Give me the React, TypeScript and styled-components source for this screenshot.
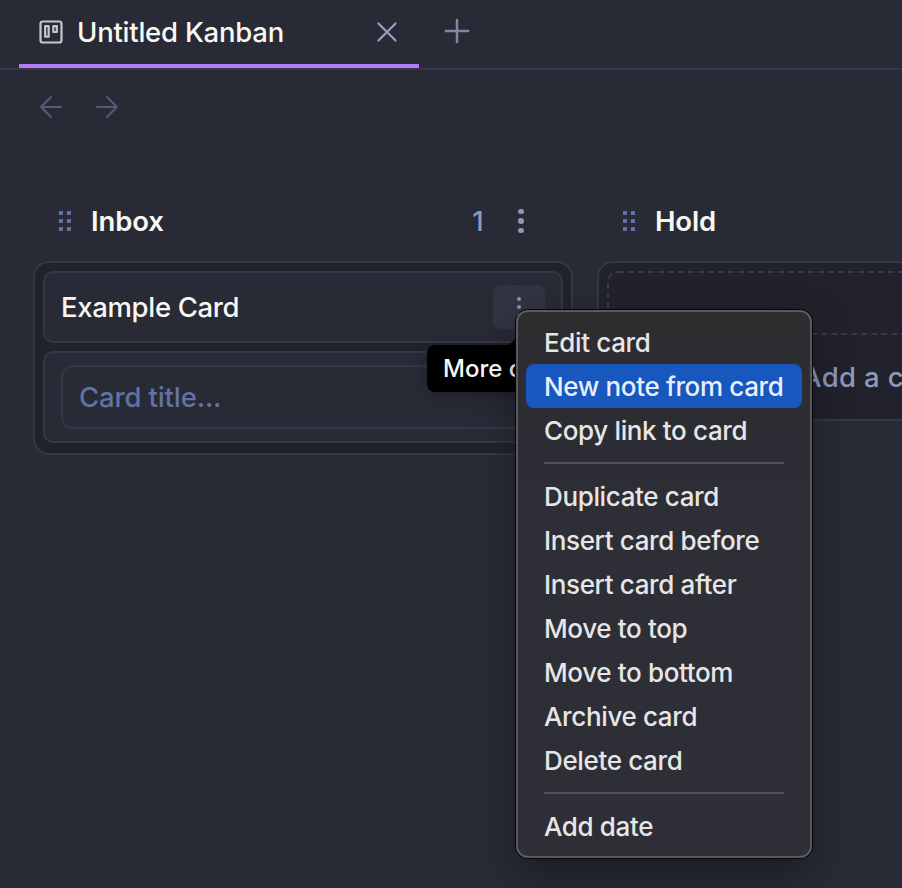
import React from "react";
import styled, { createGlobalStyle } from "styled-components";

const GlobalStyle = createGlobalStyle`
  * { box-sizing: border-box; }
  html, body { margin: 0; background: #282a36; overflow: hidden; }
  body { font-family: Inter, "Liberation Sans", sans-serif; font-weight: 450; color: #f8f8f2; }
`;

const Window = styled.main`
  position: relative;
  display: flex;
  flex-direction: column;
  width: 902px;
  height: 888px;
  overflow: hidden;
  background: #282a36;
`;

const TabBar = styled.header`
  display: flex;
  height: 70px;
  padding-left: 19px;
  border-bottom: 2px solid #343746;
`;

const Tab = styled.div`
  display: flex;
  align-items: center;
  width: 400px;
  height: 68px;
  padding: 0 15px 0 18px;
  border-bottom: 4px solid #b07cf9;
`;

const TabTitle = styled.span`
  flex: 1;
  margin-left: 12px;
  font-size: 27.5px;
  letter-spacing: -0.23px;
  line-height: 36px;
  white-space: nowrap;
`;

const Icon = styled.svg<{ $size: number; $color: string; $stroke: number }>`
  display: block;
  flex: none;
  width: ${(p) => p.$size}px;
  height: ${(p) => p.$size}px;
  fill: none;
  stroke: ${(p) => p.$color};
  stroke-width: ${(p) => p.$stroke};
  stroke-linecap: round;
  stroke-linejoin: round;
`;

const NewTab = styled.button`
  display: flex;
  margin: 12px 0 0 19px;
  padding: 0;
  border: 0;
  background: none;
`;

const NavBar = styled.nav`
  display: flex;
  align-items: center;
  gap: 22px;
  height: 74px;
  padding-left: 34px;
`;

const Board = styled.section`
  display: flex;
  align-items: flex-start;
  gap: 24px;
  padding: 37px 0 0 33px;
`;

const Column = styled.section`
  flex: none;
  width: 540px;
`;

const ColumnHeader = styled.div`
  display: flex;
  align-items: center;
  height: 80px;
  padding: 0 49.5px 0 26px;
`;

const Grip = styled.div`
  display: grid;
  grid-template-columns: 4px 4px;
  grid-auto-rows: 4px;
  gap: 4px;
`;

const GripDot = styled.i`
  background: #6272a4;
`;

const ColumnTitle = styled.h2`
  flex: 1;
  margin: 0 0 0 20px;
  font-size: 27.5px;
  font-weight: 600;
  letter-spacing: -0.15px;
  line-height: 36px;
`;

const Count = styled.span`
  margin-right: 34.5px;
  font-size: 27.5px;
  line-height: 36px;
  color: #8e99bd;
`;

const Dots = styled.div<{ $size: number; $gap: number }>`
  display: flex;
  flex-direction: column;
  gap: ${(p) => p.$gap}px;
  i {
    width: ${(p) => p.$size}px;
    height: ${(p) => p.$size}px;
    border-radius: 50%;
    background: #8e97b8;
  }
`;

const Lane = styled.div`
  display: flex;
  flex-direction: column;
  gap: 8px;
  padding: 8px 8px 10px;
  border: 2px solid #343746;
  border-radius: 16px;
  background: #21222c;
`;

const Card = styled.article`
  display: flex;
  align-items: center;
  justify-content: space-between;
  height: 72px;
  padding: 0 16px;
  border: 2px solid #343746;
  border-radius: 10px;
  background: #282a36;
`;

const CardTitle = styled.span`
  font-size: 27.5px;
  letter-spacing: -0.33px;
  line-height: 36px;
`;

const CardMenuButton = styled.button`
  display: flex;
  align-items: center;
  justify-content: center;
  width: 52px;
  height: 44px;
  padding: 0;
  border: 0;
  border-radius: 8px;
  background: #313442;
`;

const CardForm = styled(Card)`
  height: 92px;
  padding: 0 16px;
`;

const TitleInput = styled.div`
  flex: 1;
  height: 64px;
  padding-left: 16px;
  border: 2px solid #343746;
  border-radius: 12px;
  font-size: 27.5px;
  letter-spacing: -0.13px;
  line-height: 60px;
  color: #6272a4;
`;

const EmptyCards = styled.svg`
  display: block;
  width: 520px;
  height: 64px;
  fill: none;
  stroke: #383a49;
  stroke-width: 2;
  stroke-dasharray: 6 4;
`;

const AddCard = styled.div`
  height: 66px;
  padding: 0 0 0 195px;
  font-size: 27.5px;
  letter-spacing: 0.35px;
  line-height: 68px;
  color: #8e99bd;
`;

const Tooltip = styled.div`
  position: absolute;
  left: 427px;
  top: 345px;
  width: 184px;
  height: 47px;
  padding-left: 16px;
  border-radius: 8px;
  background: #000;
  box-shadow: 0 4px 16px rgba(0, 0, 0, 0.25);
  color: #fafafa;
  font-size: 24px;
  font-weight: 550;
  line-height: 47px;
  &::before {
    content: "";
    position: absolute;
    left: 82px;
    top: -10px;
    border: solid transparent;
    border-width: 0 10px 10px;
    border-bottom-color: #000;
  }
`;

const Menu = styled.div`
  position: absolute;
  left: 516px;
  top: 310px;
  width: 296px;
  height: 548px;
  padding: 8px;
  border: 2px solid #58595d;
  border-radius: 12px;
  background: linear-gradient(#2d2c2f, #2c2d34 120px, #2e2e36 200px);
  box-shadow: 0 0 0 1px #060608, 0 14px 40px rgba(0, 0, 0, 0.36);
`;

const MenuItem = styled.div<{ $active?: boolean }>`
  height: 44px;
  padding-left: 18px;
  border-radius: 8px;
  background: ${(p) => (p.$active ? "#1857bd" : "transparent")};
  color: ${(p) => (p.$active ? "#e8eefb" : "#e6e6e6")};
  font-size: 26px;
  letter-spacing: -0.36px;
  line-height: 46px;
  white-space: nowrap;
`;

const Divider = styled.div`
  height: 2px;
  margin: 10px 18px;
  background: #515259;
`;

const groups = [
  ["Edit card", "New note from card", "Copy link to card"],
  ["Duplicate card", "Insert card before", "Insert card after", "Move to top", "Move to bottom", "Archive card", "Delete card"],
  ["Add date"],
];

const GripHandle = () => (
  <Grip>{[0, 1, 2, 3, 4, 5].map((n) => <GripDot key={n} />)}</Grip>
);

export default function App() {
  return (
    <Window>
      <GlobalStyle />
      <TabBar>
        <Tab>
          <Icon viewBox="0 0 24 24" $size={28} $color="#c6c7c6" $stroke={1.9}>
            <rect x="3" y="3" width="18" height="18" rx="2" />
            <rect x="7" y="7" width="3" height="9" />
            <rect x="14" y="7" width="3" height="5" />
          </Icon>
          <TabTitle>Untitled Kanban</TabTitle>
          <Icon viewBox="0 0 24 24" $size={34} $color="#949fc0" $stroke={1.6}>
            <path d="M18 6 6 18M6 6l12 12" />
          </Icon>
        </Tab>
        <NewTab>
          <Icon viewBox="0 0 24 24" $size={38} $color="#7f87a6" $stroke={1.6}>
            <path d="M5 12h14M12 5v14" />
          </Icon>
        </NewTab>
      </TabBar>
      <NavBar>
        <Icon viewBox="0 0 24 24" $size={34} $color="#535b74" $stroke={1.5}>
          <path d="M19 12H5M12 19l-7-7 7-7" />
        </Icon>
        <Icon viewBox="0 0 24 24" $size={34} $color="#535b74" $stroke={1.5}>
          <path d="M5 12h14M12 5l7 7-7 7" />
        </Icon>
      </NavBar>
      <Board>
        <Column>
          <ColumnHeader>
            <GripHandle />
            <ColumnTitle>Inbox</ColumnTitle>
            <Count>1</Count>
            <Dots $size={5.4} $gap={4}><i /><i /><i /></Dots>
          </ColumnHeader>
          <Lane>
            <Card>
              <CardTitle>Example Card</CardTitle>
              <CardMenuButton>
                <Dots $size={4.6} $gap={3.6}><i /><i /><i /></Dots>
              </CardMenuButton>
            </Card>
            <CardForm>
              <TitleInput>Card title...</TitleInput>
            </CardForm>
          </Lane>
        </Column>
        <Column>
          <ColumnHeader>
            <GripHandle />
            <ColumnTitle>Hold</ColumnTitle>
          </ColumnHeader>
          <Lane>
            <EmptyCards viewBox="0 0 520 64">
              <rect x="1" y="1" width="518" height="62" rx="10" />
            </EmptyCards>
            <AddCard>Add a card</AddCard>
          </Lane>
        </Column>
      </Board>
      <Tooltip>More options</Tooltip>
      <Menu>
        {groups.map((items, g) => (
          <React.Fragment key={g}>
            {g > 0 && <Divider />}
            {items.map((label) => (
              <MenuItem key={label} $active={label === "New note from card"}>{label}</MenuItem>
            ))}
          </React.Fragment>
        ))}
      </Menu>
    </Window>
  );
}
